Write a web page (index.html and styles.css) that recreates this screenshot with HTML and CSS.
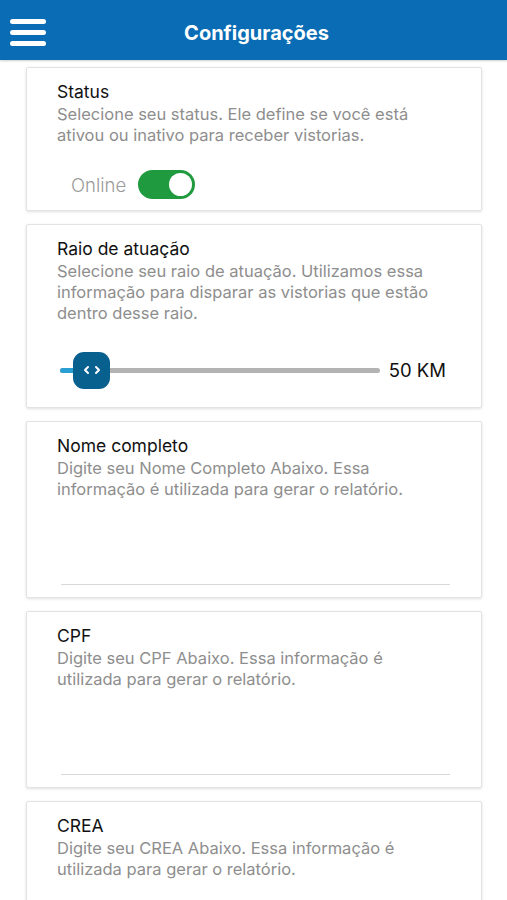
FILE: index.html
```html
<!DOCTYPE html>
<html lang="pt-br">
<head>
  <meta charset="UTF-8" />
  <meta name="viewport" content="width=device-width, initial-scale=1.0" />
  <title>Configurações</title>
  <link rel="stylesheet" href="styles.css">
</head>
<body>

  <header class="topbar">
    <button class="menu" aria-label="Menu">
      <span></span><span></span><span></span>
    </button>
    <h1>Configurações</h1>
  </header>

  <main class="lista">

    <section class="card">
      <h2>Status</h2>
      <p>Selecione seu status. Ele define se você está ativou ou inativo para receber vistorias.</p>
      <div class="status">
        <span class="status-label">Online</span>
        <span class="toggle"><span class="knob"></span></span>
      </div>
    </section>

    <section class="card">
      <h2>Raio de atuação</h2>
      <p>Selecione seu raio de atuação. Utilizamos essa informação para disparar as vistorias que estão dentro desse raio.</p>
      <div class="raio">
        <div class="trilho">
          <span class="trilho-ativo"></span>
          <span class="thumb">
            <svg width="18" height="10" viewBox="0 0 18 10">
              <path d="M5 2 L2 5 L5 8" fill="none" stroke="#fff" stroke-width="2" stroke-linecap="round" stroke-linejoin="round"/>
              <path d="M13 2 L16 5 L13 8" fill="none" stroke="#fff" stroke-width="2" stroke-linecap="round" stroke-linejoin="round"/>
            </svg>
          </span>
        </div>
        <span class="km">50 KM</span>
      </div>
    </section>

    <section class="card campo">
      <h2>Nome completo</h2>
      <p>Digite seu Nome Completo Abaixo. Essa informação é utilizada para gerar o relatório.</p>
      <input type="text" class="entrada">
    </section>

    <section class="card campo">
      <h2>CPF</h2>
      <p>Digite seu CPF Abaixo. Essa informação é utilizada para gerar o relatório.</p>
      <input type="text" class="entrada">
    </section>

    <section class="card campo">
      <h2>CREA</h2>
      <p>Digite seu CREA Abaixo. Essa informação é utilizada para gerar o relatório.</p>
      <input type="text" class="entrada">
    </section>

  </main>

</body>
</html>
```

FILE: styles.css
```css
body {
  margin: 0;
  font-family: Inter, "Liberation Sans", Arial, sans-serif;
  background-color: #fff;
  color: #111;
  overflow: hidden;
}

.topbar {
  height: 60px;
  background-color: #0a6cb4;
  display: flex;
  align-items: center;
  justify-content: center;
  position: relative;
  box-shadow: 0 1px 2px rgba(0, 0, 0, 0.2);
}

.topbar h1 {
  margin: 0;
  color: white;
  font-size: 20px;
  font-weight: bold;
  padding: 6px 0 0 6px;
}

.menu {
  position: absolute;
  left: 10px;
  top: 19px;
  width: 36px;
  padding: 0;
  border: none;
  background: none;
  display: flex;
  flex-direction: column;
  gap: 6px;
}

.menu span {
  display: block;
  height: 5px;
  border-radius: 3px;
  background-color: white;
}

.lista {
  padding: 7px 25px 0 26px;
  display: flex;
  flex-direction: column;
  gap: 13px;
}

.card {
  background-color: white;
  border: 1px solid #e3e3e3;
  border-radius: 2px;
  box-shadow: 0 1px 3px rgba(0, 0, 0, 0.12);
  padding: 13px 30px 10px 30px;
}

.card h2 {
  margin: 0;
  font-size: 17.5px;
  font-weight: normal;
  line-height: 22px;
  color: #111;
}

.card p {
  margin: 1px 16px 0 0;
  font-size: 16.5px;
  line-height: 21px;
  color: #8e8e8e;
}

/* Status */
.status {
  display: flex;
  align-items: center;
  gap: 12px;
  margin: 24px 0 1px;
  padding-left: 14px;
}

.status-label {
  font-size: 18.5px;
  font-weight: 300;
  color: #9a9a9a;
}

.toggle {
  width: 57px;
  height: 29px;
  border-radius: 15px;
  background-color: #1f9a3e;
  display: flex;
  align-items: center;
  justify-content: flex-end;
  padding: 0 3px;
  box-sizing: border-box;
}

.knob {
  width: 23px;
  height: 23px;
  border-radius: 50%;
  background-color: white;
}

/* Raio */
.raio {
  display: flex;
  align-items: center;
  gap: 9px;
  margin: 35px 5px 16px 0;
  padding-left: 3px;
}

.trilho {
  flex: 1;
  height: 5px;
  border-radius: 3px;
  background-color: #b3b3b3;
  position: relative;
}

.trilho-ativo {
  position: absolute;
  left: 0;
  top: 0;
  width: 20px;
  height: 5px;
  border-radius: 3px 0 0 3px;
  background-color: #2a9fd4;
}

.thumb {
  position: absolute;
  left: 13px;
  top: -16px;
  width: 37px;
  height: 37px;
  border-radius: 11px;
  background-color: #08608f;
  display: flex;
  align-items: center;
  justify-content: center;
}

.km {
  font-size: 18.5px;
  color: #111;
}

/* Campos */
.campo {
  height: 150px;
  display: flex;
  flex-direction: column;
  padding-bottom: 12px;
}

.entrada {
  margin-top: auto;
  margin-left: 4px;
  margin-right: 1px;
  border: none;
  border-bottom: 1px solid #d8d8d8;
  background: transparent;
  padding: 0;
  height: 20px;
  outline: none;
}
```
